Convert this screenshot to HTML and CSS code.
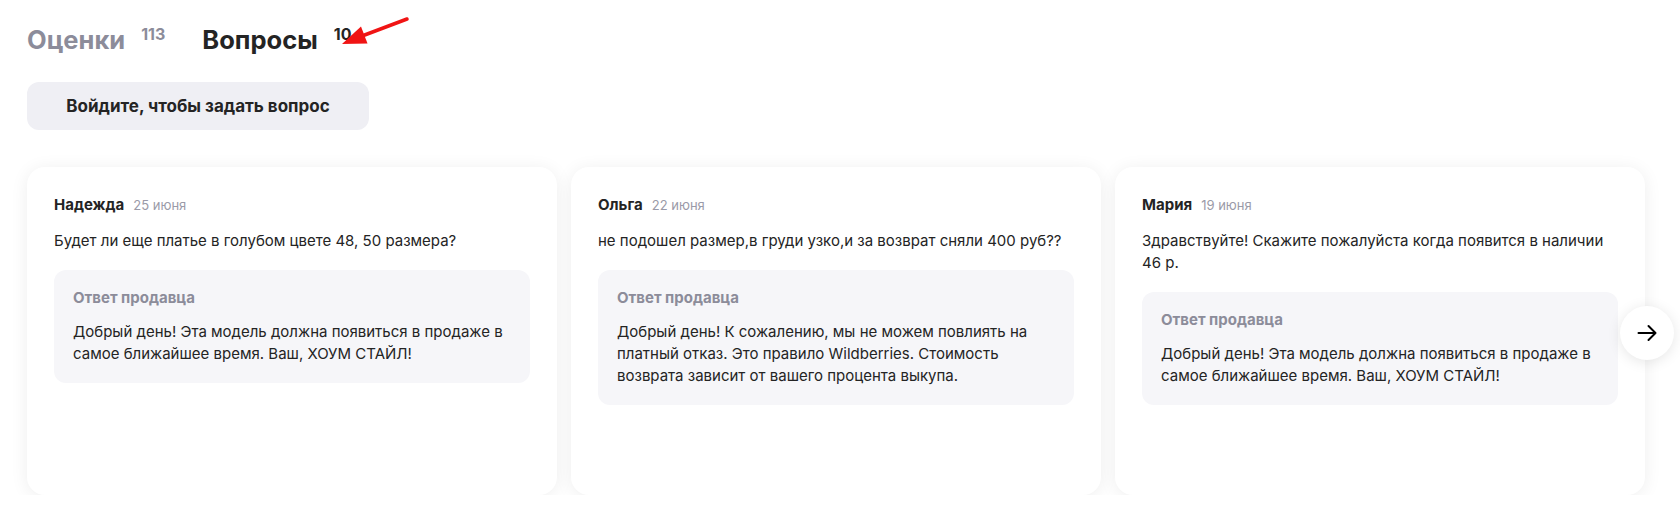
FILE: index.html
```html
<!DOCTYPE html>
<html lang="ru">
<head>
<meta charset="utf-8">
<title>Вопросы</title>
<link rel="stylesheet" href="styles.css">
</head>
<body>
<div class="page">
  <div class="tabs">
    <div class="tab tab-muted"><span class="tab-title">Оценки</span><span class="tab-count">113</span></div>
    <div class="tab tab-active"><span class="tab-title">Вопросы</span><span class="tab-count">10</span></div>
  </div>
  <button class="ask-btn">Войдите, чтобы задать вопрос</button>
  <div class="slider">
    <div class="cards">
      <div class="card">
        <div class="meta"><span class="name">Надежда</span><span class="date">25 июня</span></div>
        <p class="question">Будет ли еще платье в голубом цвете 48, 50 размера?</p>
        <div class="answer">
          <div class="answer-label">Ответ продавца</div>
          <p class="answer-text">Добрый день! Эта модель должна появиться в продаже в самое ближайшее время. Ваш, ХОУМ СТАЙЛ!</p>
        </div>
      </div>
      <div class="card">
        <div class="meta"><span class="name">Ольга</span><span class="date">22 июня</span></div>
        <p class="question">не подошел размер,в груди узко,и за возврат сняли 400 руб??</p>
        <div class="answer">
          <div class="answer-label">Ответ продавца</div>
          <p class="answer-text">Добрый день! К сожалению, мы не можем повлиять на платный отказ. Это правило Wildberries. Стоимость возврата зависит от вашего процента выкупа.</p>
        </div>
      </div>
      <div class="card">
        <div class="meta"><span class="name">Мария</span><span class="date">19 июня</span></div>
        <p class="question">Здравствуйте! Скажите пожалуйста когда появится в наличии 46 р.</p>
        <div class="answer">
          <div class="answer-label">Ответ продавца</div>
          <p class="answer-text">Добрый день! Эта модель должна появиться в продаже в самое ближайшее время. Ваш, ХОУМ СТАЙЛ!</p>
        </div>
      </div>
    </div>
    <button class="next-btn" aria-label="Далее">
      <svg width="24" height="24" viewBox="0 0 24 24" fill="none" stroke="#000" stroke-width="2" stroke-linecap="round" stroke-linejoin="round"><path d="M3.5 12h17M13.5 5l7 7-7 7"/></svg>
    </button>
  </div>
  <svg class="annotation" width="90" height="40" viewBox="0 0 90 40">
    <line x1="77" y1="9" x2="32" y2="26" stroke="#f01414" stroke-width="3.5" stroke-linecap="round"/>
    <polygon points="12,34 31,16.5 37.5,33.5" fill="#f01414"/>
  </svg>
</div>
</body>
</html>
```
FILE: styles.css
```css
* { box-sizing: border-box; }
html, body { margin: 0; padding: 0; background: #fff; }
body { font-family: Inter, "Noto Sans", "Liberation Sans", sans-serif; color: #242424; }
.page { position: relative; padding: 24px 0 0 27px; }

.tabs { display: flex; align-items: flex-start; gap: 37px; }
.tab { display: flex; align-items: flex-start; gap: 16px; }
.tab-title { font-size: 25.5px; line-height: 32px; font-weight: 700; }
.tab-count { font-size: 16px; line-height: 20px; font-weight: 700; }
.tab-muted .tab-title, .tab-muted .tab-count { color: #8c8c9a; }
.tab-active .tab-title, .tab-active .tab-count { color: #242424; }

.ask-btn {
  display: block;
  margin-top: 26px;
  width: 342px; height: 48px;
  border: 0; border-radius: 12px;
  background: #efeff4;
  font-family: inherit; font-size: 17px; font-weight: 700; color: #242424;
}

.slider { position: relative; margin-top: 37px; }
.cards { display: flex; gap: 14px; }
.card {
  flex: 0 0 530px; height: 328px;
  background: #fff; border-radius: 18px;
  box-shadow: 0 2px 18px rgba(0, 0, 0, 0.07);
  padding: 28px 27px;
}
.meta { display: flex; align-items: baseline; gap: 9px; line-height: 20px; }
.name { font-size: 15px; font-weight: 700; color: #242424; }
.date { font-size: 13px; color: #9a9aa8; }
.question { margin: 15px 0 0; font-size: 15px; line-height: 22px; color: #242424; }
.answer { margin-top: 18px; background: #f6f6f9; border-radius: 12px; padding: 18px 19px; }
.answer-label { font-size: 15px; line-height: 20px; font-weight: 700; color: #8c8c9a; }
.answer-text { margin: 13px 0 0; font-size: 15px; line-height: 22px; color: #242424; }

.next-btn {
  position: absolute; left: 1593px; top: 139px;
  width: 54px; height: 54px; border-radius: 50%; border: 0;
  background: #fff; box-shadow: 0 2px 14px rgba(0, 0, 0, 0.1);
  display: flex; align-items: center; justify-content: center; padding: 0;
}
.annotation { position: absolute; left: 330px; top: 10px; }
```
